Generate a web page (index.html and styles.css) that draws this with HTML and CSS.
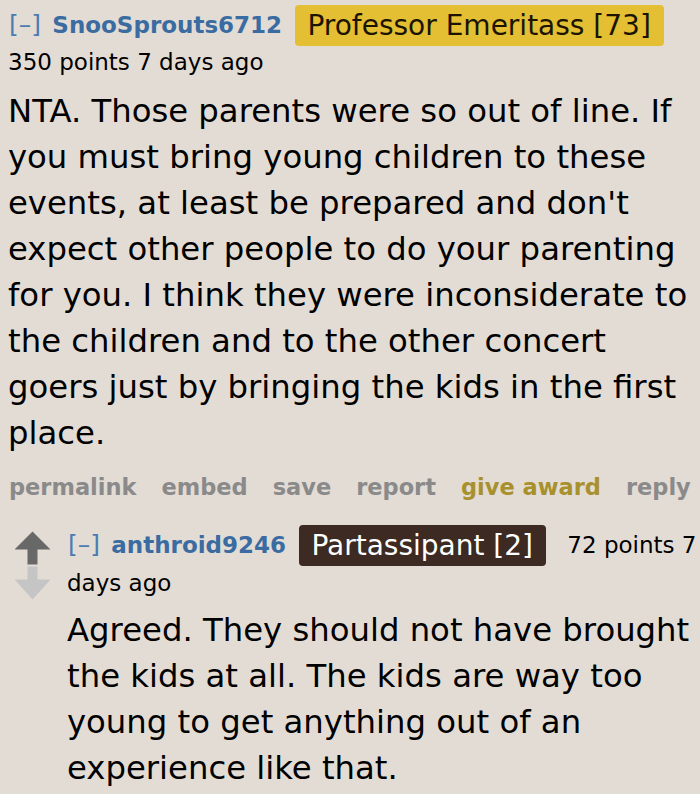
FILE: index.html
```html
<!DOCTYPE html>
<html>
<head>
<meta charset="utf-8">
<link rel="stylesheet" href="styles.css">
</head>
<body>
<div class="page">
  <div class="comment">
    <p class="tagline"><span class="expand">[–]</span> <a class="author">SnooSprouts6712</a> <span class="flair flair-gold">Professor Emeritass [73]</span><br><span class="score">350 points</span> <span class="time">7 days ago</span></p>
    <div class="md">NTA. Those parents were so out of line. If you must bring young children to these events, at least be prepared and don't expect other people to do your parenting for you. I think they were inconsiderate to the children and to the other concert goers just by bringing the kids in the first place.</div>
    <ul class="buttons">
      <li>permalink</li>
      <li>embed</li>
      <li>save</li>
      <li>report</li>
      <li class="award">give award</li>
      <li>reply</li>
    </ul>
  </div>
  <div class="child">
    <div class="votes">
      <svg class="arrow" width="36" height="34" viewBox="0 0 36 34"><path d="M17.5 0.5 L35.5 18.5 L22.5 18.5 L22.5 33.5 L12.5 33.5 L12.5 18.5 L-0.5 18.5 Z" fill="#686868"/></svg>
      <svg class="arrow" width="36" height="34" viewBox="0 0 36 34"><path d="M12.5 0.5 L22.5 0.5 L22.5 13.5 L35.5 13.5 L17.5 33.5 L-0.5 13.5 L12.5 13.5 Z" fill="#c5c5c5"/></svg>
    </div>
    <div class="entry">
      <p class="tagline"><span class="expand">[–]</span> <a class="author">anthroid9246</a> <span class="flair flair-dark">Partassipant [2]</span> <span class="score">72 points 7</span><br><span class="time">days ago</span></p>
      <div class="md">Agreed. They should not have brought the kids at all. The kids are way too young to get anything out of an experience like that.</div>
    </div>
  </div>
</div>
</body>
</html>
```
FILE: styles.css
```css
html, body {
  margin: 0;
  padding: 0;
  background: #e3dcd5;
}
.page {
  padding: 0 6px 0 8px;
  font-family: "DejaVu Sans", Verdana, sans-serif;
  color: #000;
}
.tagline {
  margin: 0;
  font-size: 23px;
  line-height: 36px;
  padding-top: 7px;
}
.expand {
  color: #4a7cb3;
  font-size: 25px;
  margin-right: 4px;
  margin-left: 1px;
}
.author {
  color: #3a6ca2;
  font-weight: bold;
}
.flair {
  display: inline-block;
  font-size: 28px;
  line-height: 41px;
  margin: -3px 14px -3px 6px;
  padding: 0 13px 0 12px;
  border-radius: 4px;
  vertical-align: middle;
  position: relative;
  top: -1px;
}
.flair-gold {
  background: #e4be33;
  color: #1a1400;
}
.flair-dark {
  background: #3d2a22;
  color: #fff;
}
.md {
  font-size: 32.3px;
  line-height: 46px;
  margin-top: 8px;
}
.buttons {
  list-style: none;
  margin: 11px 0 0;
  padding: 0 0 0 1px;
  display: flex;
  gap: 25px;
  font-weight: bold;
  font-size: 22.5px;
  line-height: 40px;
  color: #8a8a8a;
}
.buttons .award {
  color: #a8912d;
}
.child {
  display: flex;
  margin-top: 19px;
}
.votes {
  width: 59px;
  display: flex;
  flex-direction: column;
  align-items: flex-start;
  padding-top: 5px;
  padding-left: 7px;
  gap: 1px;
  flex-shrink: 0;
  box-sizing: border-box;
}
.arrow {
  display: block;
}
.entry {
  flex: 1;
  min-width: 0;
}
.child .tagline {
  line-height: 38px;
  padding-top: 0;
  margin-right: -6px;
  white-space: nowrap;
}
.child .md {
  margin-top: 5px;
}
```
